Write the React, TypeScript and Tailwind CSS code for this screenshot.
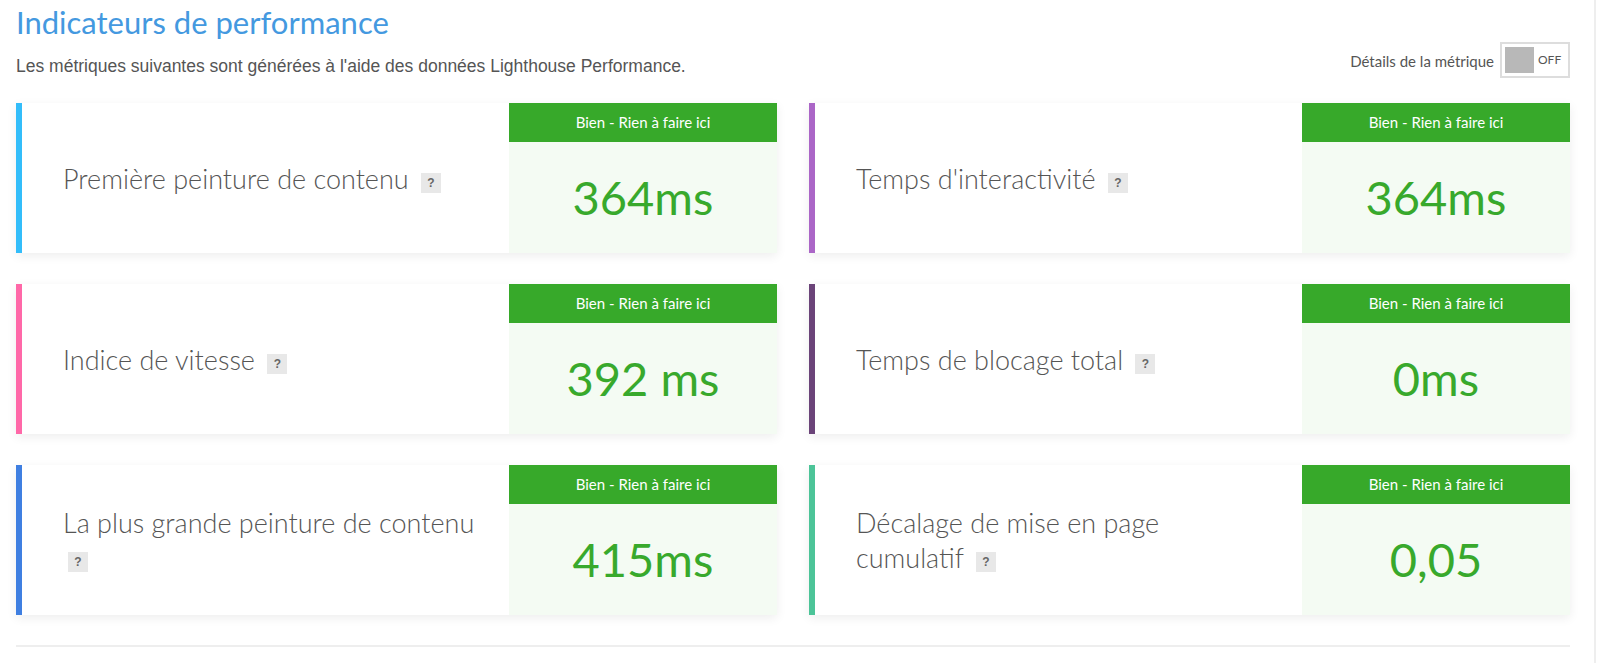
import React from 'react';

type Metric = {
  lines: string[];
  value: string;
  accent: string;
};

const metrics: Metric[] = [
  { lines: ['Première peinture de contenu'], value: '364ms', accent: 'border-[#33bdfa]' },
  { lines: ["Temps d'interactivité"], value: '364ms', accent: 'border-[#ab66c7]' },
  { lines: ['Indice de vitesse'], value: '392 ms', accent: 'border-[#ff68a8]' },
  { lines: ['Temps de blocage total'], value: '0ms', accent: 'border-[#6b4479]' },
  { lines: ['La plus grande peinture de contenu'], value: '415ms', accent: 'border-[#3f7fe1]' },
  { lines: ['Décalage de mise en page', 'cumulatif'], value: '0,05', accent: 'border-[#4cc498]' },
];

function HelpBadge() {
  return (
    <span className="ml-[5px] inline-flex h-[20px] w-[20px] items-center justify-center bg-[#e8e8e8] align-[2px] font-['Liberation_Sans',Arial,sans-serif] text-[12px] font-bold leading-none text-[#666]">
      ?
    </span>
  );
}

function MetricCard({ metric }: { metric: Metric }) {
  return (
    <div className={`flex h-[150px] border-l-[6px] bg-white shadow-[0_3px_10px_rgba(0,0,0,0.07)] ${metric.accent}`}>
      <div className="flex flex-1 items-center pl-[41px] pr-[12px]">
        <p className="font-['Lato',sans-serif] text-[27px] font-light leading-[35px] text-[#555]">
          {metric.lines.map((line, i) => (
            <React.Fragment key={line}>
              {i > 0 && <br />}
              {line}
            </React.Fragment>
          ))}{' '}
          <HelpBadge />
        </p>
      </div>
      <div className="flex w-[268px] flex-col">
        <div className="flex h-[39px] items-center justify-center bg-[#37a92a] font-['Lato',sans-serif] text-[15px] font-normal text-white">
          Bien - Rien à faire ici
        </div>
        <div className="flex flex-1 items-center justify-center bg-[#f4fbf3] font-['Lato',sans-serif] text-[47px] font-normal text-[#38a92c]">
          {metric.value}
        </div>
      </div>
    </div>
  );
}

export default function App() {
  return (
    <div className="min-h-screen w-[1596px] border-r-2 border-[#eeeeee] bg-white">
      <div className="w-[1570px] pl-4">
        <div className="flex h-[103px] justify-between">
          <div>
            <h1 className="mt-[3px] font-['Lato',sans-serif] text-[31px] font-normal leading-[38px] text-[#4499e0]">
              Indicateurs de performance
            </h1>
            <p className="mt-[15px] font-['Liberation_Sans',Arial,sans-serif] text-[17.5px] leading-[20px] text-[#555]">
              Les métriques suivantes sont générées à l'aide des données Lighthouse Performance.
            </p>
          </div>
          <div className="mt-[42px] flex items-start gap-[6px]">
            <span className="mt-[8px] font-['Lato',sans-serif] text-[15px] text-[#555]">Détails de la métrique</span>
            <div className="flex h-[36px] w-[70px] items-center border-2 border-[#dddddd] bg-white p-[3px]">
              <div className="h-[26px] w-[29px] bg-[#b8b8b8]" />
              <span className="ml-[4px] font-['Lato',sans-serif] text-[12px] text-[#555]">OFF</span>
            </div>
          </div>
        </div>

        <div className="grid w-[1554px] grid-cols-2 gap-x-[32px] gap-y-[31px]">
          {metrics.map((m) => (
            <MetricCard key={m.lines.join(' ')} metric={m} />
          ))}
        </div>

        <div className="mt-[30px] h-[2px] w-[1554px] bg-[#eeeeee]" />
        <div className="h-[40px]" />
      </div>
    </div>
  );
}
